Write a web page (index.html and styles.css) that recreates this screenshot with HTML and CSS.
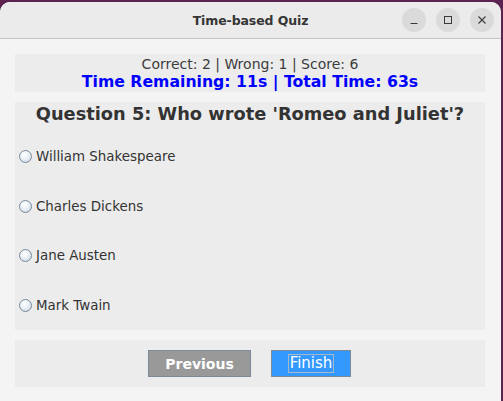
FILE: index.html
```html
<!DOCTYPE html>
<html>
<head>
<meta charset="utf-8">
<link rel="stylesheet" href="styles.css">
</head>
<body>
<div class="window">
  <div class="titlebar">
    <div class="title">Time-based Quiz</div>
    <div class="controls">
      <div class="ctl"><svg width="10" height="10" viewBox="0 0 10 10"><path d="M1.5 8.5h7" stroke="#3a3a3a" stroke-width="1.1"/></svg></div>
      <div class="ctl"><svg width="10" height="10" viewBox="0 0 10 10"><rect x="1.5" y="1.5" width="7" height="7" fill="none" stroke="#3a3a3a" stroke-width="1"/></svg></div>
      <div class="ctl"><svg width="10" height="10" viewBox="0 0 10 10"><path d="M1.5 1.5l7 7M8.5 1.5l-7 7" stroke="#3a3a3a" stroke-width="1.1"/></svg></div>
    </div>
  </div>
  <div class="content">
    <div class="panel stats">
      <div class="score">Correct: 2 | Wrong: 1 | Score: 6</div>
      <div class="time">Time Remaining: 11s | Total Time: 63s</div>
    </div>
    <div class="panel question">
      <div class="qtitle">Question 5: Who wrote 'Romeo and Juliet'?</div>
      <div class="option"><span class="radio"></span>William Shakespeare</div>
      <div class="option"><span class="radio"></span>Charles Dickens</div>
      <div class="option"><span class="radio"></span>Jane Austen</div>
      <div class="option"><span class="radio"></span>Mark Twain</div>
    </div>
    <div class="panel buttons">
      <div class="btn prev">Previous</div>
      <div class="btn finish"><span class="focus">Finish</span></div>
    </div>
  </div>
</div>
</body>
</html>
```
FILE: styles.css
```css
html, body {
  margin: 0;
  padding: 0;
}
body {
  background: #5d2350;
  width: 503px;
  height: 401px;
  overflow: hidden;
  font-family: "DejaVu Sans", sans-serif;
}
.window {
  margin-top: 2px;
  width: 501px;
  height: 399px;
  border-radius: 10px 10px 0 0;
  overflow: hidden;
  background: #f4f4f4;
  display: flex;
  flex-direction: column;
}
.titlebar {
  height: 36px;
  background: #ebebeb;
  border-bottom: 1px solid #c4c4c4;
  position: relative;
  display: flex;
  align-items: center;
  justify-content: center;
  flex-shrink: 0;
}
.title {
  font-family: "DejaVu Sans", sans-serif;
  font-weight: bold;
  font-size: 12.5px;
  color: #353535;
  letter-spacing: -0.1px;
}
.controls {
  position: absolute;
  right: 7px;
  top: 6px;
  display: flex;
  gap: 10px;
}
.ctl {
  width: 24px;
  height: 24px;
  border-radius: 50%;
  background: #dadada;
  display: flex;
  align-items: center;
  justify-content: center;
}
.content {
  padding: 15px 16px 14px 15px;
  display: flex;
  flex-direction: column;
  gap: 10px;
  flex: 1;
}
.panel {
  background: #ececec;
}
.stats {
  height: 38px;
  display: flex;
  flex-direction: column;
  align-items: center;
}
.score {
  font-size: 14px;
  color: #3c3c3c;
  line-height: 17px;
  margin-top: 2px;
}
.time {
  font-size: 15.7px;
  font-weight: bold;
  color: #0000ff;
  line-height: 18px;
}
.question {
  height: 228px;
  display: flex;
  flex-direction: column;
}
.qtitle {
  font-size: 17.8px;
  font-weight: bold;
  color: #333;
  text-align: center;
  height: 24px;
  line-height: 24px;
  margin-bottom: 6px;
}
.option {
  height: 50px;
  display: flex;
  align-items: center;
  font-size: 13.4px;
  color: #333;
  padding-left: 4px;
}
.radio {
  width: 11px;
  height: 11px;
  border-radius: 50%;
  border: 1px solid #7a8a9a;
  background: radial-gradient(circle at 40% 35%, #ffffff 0%, #e8eef4 50%, #b8c8d8 100%);
  margin-right: 4px;
}
.buttons {
  height: 47px;
  display: flex;
  justify-content: center;
  align-items: flex-start;
  padding-top: 10px;
  box-sizing: border-box;
  gap: 20px;
  padding-right: 1px;
}
.btn {
  height: 27px;
  box-sizing: border-box;
  border: 1px solid #7a8a99;
  color: #fff;
  font-size: 15px;
  display: flex;
  align-items: center;
  justify-content: center;
}
.prev {
  width: 103px;
  background: #999999;
  font-weight: bold;
  font-size: 14px;
}
.finish {
  width: 80px;
  background: #3399ff;
}
.focus {
  border: 1px solid #a8b8c8;
  padding: 0 1px;
  line-height: 17px;
}
```
